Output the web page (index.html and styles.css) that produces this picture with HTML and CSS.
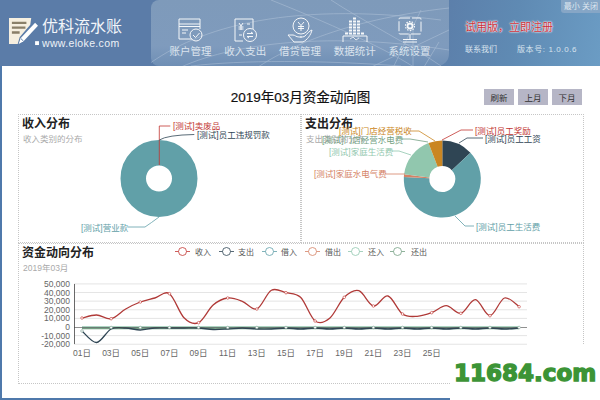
FILE: index.html
```html
<!DOCTYPE html>
<html lang="zh-CN">
<head>
    <meta charset="UTF-8">
    <title>优科流水账</title>
    <link rel="stylesheet" href="styles.css">
</head>
<body>
    <header class="top">
        <div class="logo">
            <svg class="logo-icon" width="31" height="29" viewBox="0 0 32 30">
                <path d="M1 1h23l-1 7-11 13-2 7H1z" fill="#f6efe0"/>
                <path d="M4 6h15M4 11h14M4 16h8" stroke="#8a7f68" stroke-width="2.4"/>
                <path d="M31 9 16 25l-5 3 2-6L28 6z" fill="#fff"/>
                <path d="M13 22l3 3" stroke="#5a7ca8"/>
                <rect x="28" y="25" width="4" height="4" fill="#fff"/>
            </svg>
            <div>
                <div class="logo-name">优科流水账</div>
                <div class="logo-url">www.eloke.com</div>
            </div>
        </div>
        <nav class="nav">
            <svg class="globe" width="298" height="66" viewBox="0 0 298 66">
                <g fill="none" stroke="#c4d3e4" stroke-width=".7" opacity=".55">
                    <path d="M-10 70C40 30 130 0 290 20"/>
                    <path d="M20 72C70 45 170 30 298 50"/>
                    <path d="M100 72C130 50 190 20 298 8"/>
                    <path d="M120 0C170 20 240 50 270 72"/>
                    <path d="M180 0C210 20 260 45 290 66"/>
                    <path d="M210 72 298 30M240 72 270 10M262 72V30M270 72l18-30"/>
                    <path d="M40 66C90 60 170 60 250 66"/>
                </g>
            </svg>
            <a class="nav-item">
                <svg width="26" height="26" viewBox="0 0 26 26" fill="none" stroke="#fff" stroke-width="1">
                    <path d="M15 22H2V2h21v10M2 7h21M2 9.500h21"/>
                    <path d="M5 13h6M5 16h4"/>
                    <circle cx="19" cy="18" r="6"/>
                    <path d="M16 18l2.500 2.500 4-4.500"/>
                </svg>
                <span>账户管理</span>
            </a>
            <a class="nav-item">
                <svg width="26" height="26" viewBox="0 0 26 26" fill="none" stroke="#fff" stroke-width="1">
                    <path d="M11 24H3V2h18v10"/>
                    <path d="M7 6l2 3 2-3M9 9v4M6.500 10h5M6.500 12h5M15 7h3M7 18h3"/>
                    <circle cx="18" cy="18" r="6.500"/>
                    <path d="M15 16.500h6l-2-1.500M21 19.500h-6l2 1.500"/>
                </svg>
                <span>收入支出</span>
            </a>
            <a class="nav-item">
                <svg width="26" height="26" viewBox="0 0 26 26" fill="none" stroke="#fff" stroke-width="1">
                    <circle cx="14" cy="9" r="8"/>
                    <path d="M11 5l3 3.500L17 5M14 8.500V14M11 9.500h6M11 11.500h6"/>
                    <path d="M1 18h5c2 0 3 2 6 2h3M1 18l6 7h9c4-2 8-7 9-12-3 1-5 4-7 6-1 1-3 1-5 1"/>
                </svg>
                <span>借贷管理</span>
            </a>
            <a class="nav-item">
                <svg width="26" height="26" viewBox="0 0 26 26" fill="none" stroke="#fff">
                    <path d="M11 1.500h4M7 4.500h12M7 7.500h12M7 10.500h12M7 13.500h12M3 16.500h20" stroke-width="2" stroke-dasharray="3 1"/>
                    <path d="M1 25v-6h24v6" stroke-width="1"/>
                    <path d="M8 22l3-2 3 3 3-2" stroke-width=".8"/>
                </svg>
                <span>数据统计</span>
            </a>
            <a class="nav-item">
                <svg width="26" height="26" viewBox="0 0 26 26" fill="none" stroke="#fff" stroke-width="1">
                    <path d="M3 1h20a1 1 0 0 1 1 1v14a1 1 0 0 1-1 1H3a1 1 0 0 1-1-1V2a1 1 0 0 1 1-1z" stroke-dasharray="10 2"/>
                    <circle cx="13" cy="9" r="2.500" stroke-width="1.800"/>
                    <circle cx="13" cy="9" r="4.500" stroke-width="1.200" stroke-dasharray="1.500 1.300"/>
                    <path d="M13 17v5M6 22.500h14M6 25h14"/>
                </svg>
                <span>系统设置</span>
            </a>
        </nav>
        <div class="side">
            <div class="win-btns">最小 关闭</div>
            <div class="trial">试用版，立即注册</div>
            <div class="info">
                <span>联系我们</span>
                <span class="version">版本号: 1.0.0.6</span>
            </div>
        </div>
    </header>

    <main class="main">
        <div class="title-row">
            <h1>2019年03月资金动向图</h1>
            <div class="btns">
                <button>刷新</button>
                <button>上月</button>
                <button>下月</button>
            </div>
        </div>

        <div class="panels">
            <section class="panel">
                <h2>收入分布</h2>
                <p class="sub">收入类别的分布</p>
                <svg class="chart" viewBox="18 114 283 129" width="283" height="129">
                    <circle class="ring" cx="159" cy="178.500" r="25.750" stroke="#61a0a8"/>
                    <g fill="none" stroke-width=".8">
                        <path d="M159.300 165V126h11" stroke="#c23531"/>
                        <path d="M159.300 140q8-5 35-5.500" stroke="#2f4554"/>
                        <path d="M159 217q-8 6-14 10h-17" stroke="#61a0a8"/>
                    </g>
                    <text class="lbl" x="173" y="129" fill="#c23531">[测试]卖废品</text>
                    <text class="lbl" x="197" y="137.500" fill="#2f4554">[测试]员工违规罚款</text>
                    <text class="lbl" x="81" y="230.500" fill="#61a0a8">[测试]营业款</text>
                </svg>
            </section>

            <section class="panel">
                <h2>支出分布</h2>
                <p class="sub">支出类别的分布</p>
                <svg class="chart" viewBox="301 114 283 129" width="283" height="129">
                    <g id="pie" data-cx="442.300" data-cy="179" data-r="25.750"></g>
                    <g fill="none" stroke-width=".8">
                        <path d="M442 140l19-10h12" stroke="#c23531"/>
                        <path d="M459 143l8-5h16" stroke="#2f4554"/>
                        <path d="M455 216l10 10h9" stroke="#61a0a8"/>
                        <path d="M435 141l-16-10h-9" stroke="#ca8622"/>
                        <path d="M428 142l-18-3h-9" stroke="#749f83"/>
                        <path d="M411 155l-12-4h-7" stroke="#91c7ae"/>
                        <path d="M405 174h-20" stroke="#d48265"/>
                    </g>
                    <text class="lbl" x="339" y="134" fill="#ca8622">[测试]门店经营税收</text>
                    <text class="lbl" x="322" y="142.500" fill="#749f83">[测试]门店经营水电费</text>
                    <text class="lbl" x="329" y="155" fill="#91c7ae">[测试]家庭生活费</text>
                    <text class="lbl" x="314" y="176.500" fill="#d48265">[测试]家庭水电气费</text>
                    <text class="lbl" x="475" y="133.500" fill="#c23531">[测试]员工奖励</text>
                    <text class="lbl" x="485" y="141.500" fill="#2f4554">[测试]员工工资</text>
                    <text class="lbl" x="476" y="229.500" fill="#61a0a8">[测试]员工生活费</text>
                </svg>
            </section>

            <section class="panel panel-wide">
                <h2>资金动向分布</h2>
                <p class="sub">2019年03月</p>
                <svg class="chart" id="trend" viewBox="18 243 566 141" width="566" height="141"></svg>
            </section>
        </div>
    </main>

    <div class="mark">11684.com</div>

    <script src="chart.js"></script>
</body>
</html>
```

FILE: styles.css
```css
html, body {
    margin: 0;
    height: 100%;
}
body {
    width: 600px;
    height: 400px;
    overflow: hidden;
    position: relative;
    background: #fff;
    font-family: "Liberation Sans", "Noto Sans CJK SC", sans-serif;
    color: #333;
}
.top {
    height: 66px;
    display: flex;
    background: linear-gradient(100deg, #5b7ca8 0%, #5b7ca8 70%, #5f8ab3 85%, #6b9cc4 100%);
}
.logo {
    width: 151px;
    box-sizing: border-box;
    padding: 17px 0 0 8px;
    display: flex;
    gap: 3px;
    color: #fff;
}
.logo-name {
    font-size: 16px;
    line-height: 20px;
    color: #f2f5f9;
}
.logo-url {
    font-size: 10.500px;
    line-height: 12px;
    letter-spacing: .35px;
    color: #eef2f7;
}
.nav {
    position: relative;
    width: 298px;
    height: 66px;
    box-sizing: border-box;
    padding: 17px 12px 0;
    display: flex;
    background: linear-gradient(180deg, #7e9aba 0%, #7f9bbd 70%, #6f8fb5 100%);
    border-radius: 8px 0 12px 8px;
}
.globe {
    position: absolute;
    left: 0;
    top: 0;
}
.nav-item {
    position: relative;
    width: 55px;
    display: flex;
    flex-direction: column;
    align-items: center;
    gap: 2px;
    font-size: 10.500px;
    line-height: 12px;
    color: #dbe4ee;
}
.nav-item svg {
    opacity: .92;
}
.side {
    position: relative;
    flex: 1;
    padding-left: 16px;
}
.win-btns {
    position: absolute;
    right: 0;
    top: 0;
    padding: 0 2px 0 3px;
    height: 13px;
    line-height: 13px;
    font-size: 8px;
    color: #dfe7f0;
    background: #86a6c6;
    border-radius: 0 0 0 3px;
}
.trial {
    margin-top: 20px;
    font-size: 11px;
    line-height: 14px;
    color: #c8303c;
    text-shadow: 0 0 2px #fff, 0 0 2px #fff, 0 0 1px #ffd0d0;
}
.info {
    margin-top: 10px;
    display: flex;
    gap: 20px;
    font-size: 8px;
    line-height: 12px;
    color: #d8e3ee;
}
.version {
    letter-spacing: .6px;
}
.main {
    height: 334px;
    box-sizing: border-box;
    border-left: 2px solid #4f79ab;
    border-bottom: 2px solid #4f79ab;
    padding-top: 23px;
}
.title-row {
    position: relative;
    height: 25px;
    text-align: center;
    padding-right: 1px;
}
h1 {
    margin: 0;
    font-size: 13.500px;
    font-weight: normal;
    line-height: 18px;
    color: #111;
    -webkit-text-stroke: .2px #111;
}
.btns {
    position: absolute;
    right: 18px;
    top: 0;
    display: flex;
    gap: 4px;
}
button {
    width: 30px;
    height: 16px;
    padding: 0;
    border: none;
    background: #b6b6c6;
    color: #333;
    font-family: inherit;
    font-size: 8.500px;
}
.panels {
    width: 566px;
    margin-left: 16px;
    display: grid;
    grid-template-columns: 283px 283px;
    grid-template-rows: 129px 141px;
}
.panel {
    position: relative;
    box-sizing: border-box;
    padding: 3px 0 0 4px;
    outline: 1px dotted #c6c6c6;
    outline-offset: -1px;
}
.panel-wide {
    grid-column: 1 / 3;
}
h2 {
    margin: 0;
    font-size: 12px;
    line-height: 14px;
    color: #222;
}
.sub {
    margin: 3px 0 0 1px;
    font-size: 8.500px;
    line-height: 11px;
    color: #aaa;
}
.chart {
    position: absolute;
    left: 0;
    top: 0;
}
.ring {
    fill: none;
    stroke-width: 25.500px;
}
.lbl {
    font-size: 8.500px;
}
.axis-text {
    font-size: 8.500px;
    fill: #666;
}
.legend-text {
    font-size: 8px;
    fill: #555;
}
.mark {
    position: absolute;
    right: 0;
    bottom: 0;
    width: 150px;
    height: 55px;
    background: #fff;
    box-sizing: border-box;
    padding: 13px 0 0 4px;
    font-family: "DejaVu Sans", sans-serif;
    font-size: 23px;
    line-height: 30px;
    font-weight: bold;
    color: #3c9436;
    -webkit-text-stroke: 1.400px #3c9436;
}
```

FILE: chart.js
```js
// pie slices: [start deg, end deg, colour], clockwise from top
const slices = [
    [0, 47, '#2f4554'],
    [47, 273, '#61a0a8'],
    [273, 277, '#d48265'],
    [277, 339, '#91c7ae'],
    [339, 360, '#ca8622']
];

const NS = 'http://www.w3.org/2000/svg';

function add(parent, tag, attrs, text) {
    const el = document.createElementNS(NS, tag);
    Object.keys(attrs).forEach(k => el.setAttribute(k, attrs[k]));
    if (text) el.textContent = text;
    parent.appendChild(el);
    return el;
}

function drawPie() {
    const g = document.getElementById('pie');
    const cx = +g.dataset.cx, cy = +g.dataset.cy, r = +g.dataset.r;
    const point = deg => {
        const a = deg * Math.PI / 180;
        return (cx + r * Math.sin(a)) + ' ' + (cy - r * Math.cos(a));
    };
    slices.forEach(s => {
        const large = s[1] - s[0] > 180 ? 1 : 0;
        add(g, 'path', {
            d: 'M' + point(s[0]) + 'A' + r + ' ' + r + ' 0 ' + large + ' 1 ' + point(s[1]),
            fill: 'none',
            stroke: s[2],
            'stroke-width': 25.5
        });
    });
}

// catmull-rom through the points, same look as the smooth line in the original chart
function smooth(pts) {
    let d = 'M' + pts[0][0] + ' ' + pts[0][1];
    for (let i = 0; i < pts.length - 1; i++) {
        const p0 = pts[i - 1] || pts[i], p1 = pts[i], p2 = pts[i + 1], p3 = pts[i + 2] || p2;
        d += 'C' + (p1[0] + (p2[0] - p0[0]) / 6) + ' ' + (p1[1] + (p2[1] - p0[1]) / 6) + ' '
            + (p2[0] - (p3[0] - p1[0]) / 6) + ' ' + (p2[1] - (p3[1] - p1[1]) / 6) + ' '
            + p2[0] + ' ' + p2[1];
    }
    return d;
}

function drawTrend() {
    const svg = document.getElementById('trend');
    const dayX = day => 82 + (day - 1) * 14.57;
    const zeroY = 327, unit = 8.62;

    // grid + y labels
    ['50,000', '40,000', '30,000', '20,000', '10,000', '0', '-10,000', '-20,000'].forEach((label, i) => {
        const y = zeroY - (5 - i) * unit;
        if (label !== '0') add(svg, 'line', { x1: 74, x2: 527, y1: y, y2: y, stroke: '#ddd', 'stroke-width': 0.8 });
        add(svg, 'text', { class: 'axis-text', x: 70, y: y + 3, 'text-anchor': 'end' }, label);
    });
    add(svg, 'line', { x1: 74.5, x2: 74.5, y1: 284, y2: 344, stroke: '#444', 'stroke-width': 0.8 });

    // x labels, every other day up to the 25th
    for (let day = 1; day <= 25; day += 2) {
        const name = (day < 10 ? '0' : '') + day + '日';
        add(svg, 'text', { class: 'axis-text', x: dayX(day), y: 356, 'text-anchor': 'middle' }, name);
    }

    const income = [318, 315, 318.7, 309, 302, 298, 293.7, 317.7, 322.7, 305, 298, 301.3, 309, 290.3, 292.7,
        297.3, 321, 318.3, 297.3, 290.7, 306, 296, 314, 316.3, 312.7, 305.7, 313.3, 299.7, 315.7, 298, 306.7];
    const expense = [331, 342.500, 329, 328, 330, 328, 328, 328, 328, 329.500, 329, 328, 329, 329, 328,
        329, 328, 329, 328, 329, 328, 329, 328, 329, 328, 329, 328, 329, 328, 329, 328];

    const flat = (colour, y, width) => add(svg, 'line', {
        x1: dayX(1), x2: dayX(31), y1: y, y2: y, stroke: colour, 'stroke-width': width
    });
    flat('#749f83', 328.5, 1.5);
    flat('#91c7ae', 327, 1.5);

    const expensePts = expense.map((y, i) => [dayX(i + 1), y]);
    add(svg, 'path', { d: smooth(expensePts), fill: 'none', stroke: '#2f4554', 'stroke-width': 1.3 });
    const incomePts = income.map((y, i) => [dayX(i + 1), y]);
    add(svg, 'path', { d: smooth(incomePts), fill: 'none', stroke: '#b03a38', 'stroke-width': 1.3 });

    // axis line at zero, to the end of the plot
    add(svg, 'line', { x1: 74, x2: 527, y1: 327.5, y2: 327.5, stroke: '#444', 'stroke-width': 0.6 });

    // markers on odd days only
    for (let day = 1; day <= 31; day += 2) {
        add(svg, 'circle', { cx: dayX(day), cy: income[day - 1], r: 1.3, fill: '#fff', stroke: '#c23531', 'stroke-width': 0.6 });
        add(svg, 'circle', { cx: dayX(day), cy: day === 1 ? 331 : 327.5, r: 1.3, fill: '#fff', stroke: '#7f9f93', 'stroke-width': 0.6 });
    }

    // legend
    [
        ['收入', 175, 195, '#c23531'], ['支出', 219, 238, '#2f4554'], ['借入', 262, 281, '#61a0a8'],
        ['借出', 305, 325, '#d48265'], ['还入', 348, 368, '#91c7ae'], ['还出', 390, 411, '#749f83']
    ].forEach(l => {
        add(svg, 'line', { x1: l[1], x2: l[1] + 15, y1: 251.5, y2: 251.5, stroke: l[3], 'stroke-width': 0.8 });
        add(svg, 'circle', { cx: l[1] + 7.5, cy: 251.5, r: 4, fill: '#fff', stroke: l[3], 'stroke-width': 0.8 });
        add(svg, 'text', { class: 'legend-text', x: l[2], y: 254.5 }, l[0]);
    });
}

drawPie();
drawTrend();
```
